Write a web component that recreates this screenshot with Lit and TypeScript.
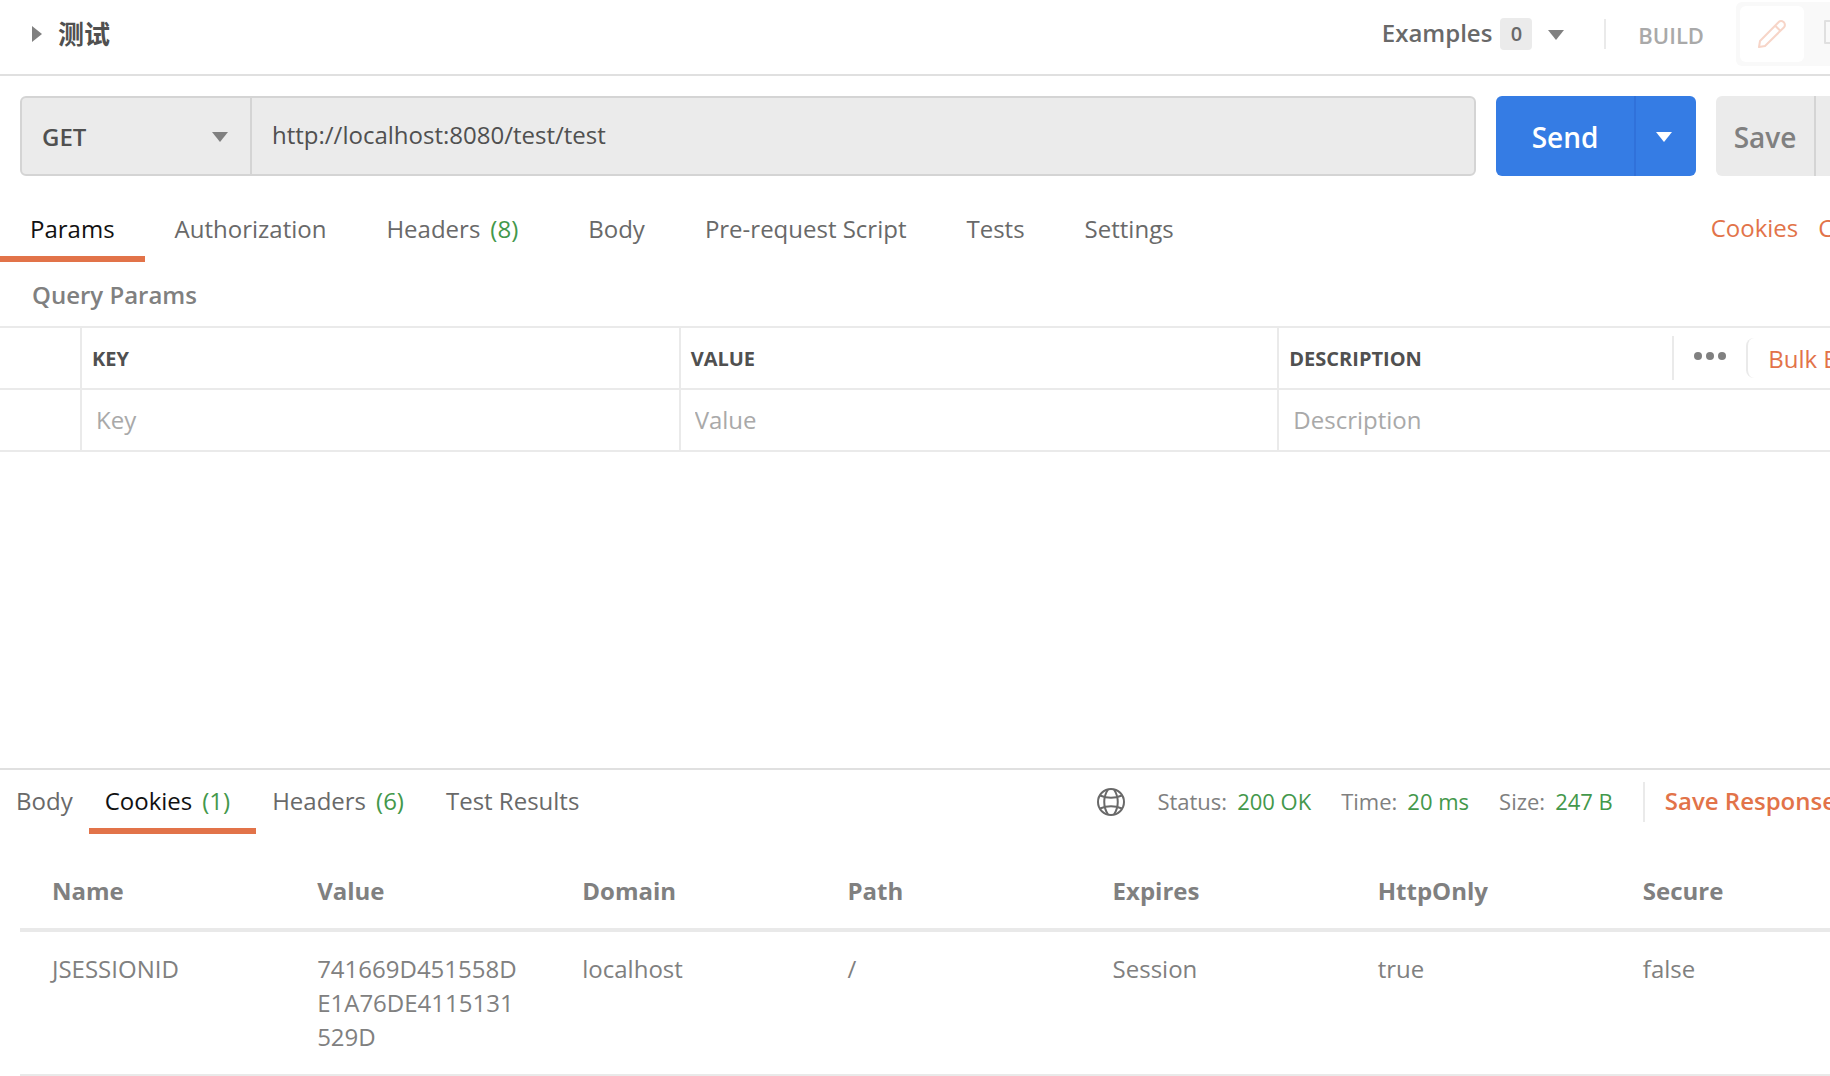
import { LitElement, html, css, svg, nothing } from "lit";
import { customElement, property, state } from "lit/decorators.js";

interface Tab {
  label: string;
  count?: number;
}

interface Cookie {
  name: string;
  value: string;
  domain: string;
  path: string;
  expires: string;
  httpOnly: boolean;
  secure: boolean;
}

const REQUEST_TABS: Tab[] = [
  { label: "Params" },
  { label: "Authorization" },
  { label: "Headers", count: 8 },
  { label: "Body" },
  { label: "Pre-request Script" },
  { label: "Tests" },
  { label: "Settings" },
];

const RESPONSE_TABS: Tab[] = [
  { label: "Body" },
  { label: "Cookies", count: 1 },
  { label: "Headers", count: 6 },
  { label: "Test Results" },
];

const COOKIES: Cookie[] = [
  {
    name: "JSESSIONID",
    value: "741669D451558DE1A76DE4115131529D",
    domain: "localhost",
    path: "/",
    expires: "Session",
    httpOnly: true,
    secure: false,
  },
];

const base = css`
  *,
  *::before,
  *::after {
    box-sizing: border-box;
  }
  button,
  input,
  select {
    margin: 0;
    padding: 0;
    border: 0;
    border-radius: 0;
    background: none;
    color: inherit;
    font: inherit;
    appearance: none;
  }
  button {
    cursor: pointer;
    white-space: nowrap;
  }
  a {
    color: inherit;
    text-decoration: none;
  }
  svg {
    display: block;
    flex: none;
  }
`;

const caret = html`<svg width="16" height="10" viewBox="0 0 16 10" aria-hidden="true">
  ${svg`<path d="M0 0H16L8 10Z" fill="currentColor" />`}
</svg>`;

@customElement("tab-strip")
class TabStrip extends LitElement {
  @property({ attribute: false }) tabs: Tab[] = [];
  @property({ type: Number }) active = 0;
  @property({ type: Boolean, reflect: true }) compact = false;

  static styles = [
    base,
    css`
      :host {
        display: block;
      }
      .strip {
        display: flex;
      }
      .tab {
        display: flex;
        gap: 10px;
        padding: 16px 30px 10px;
        border-bottom: 6px solid transparent;
        color: #696969;
        line-height: 34px;
      }
      :host([compact]) .tab {
        padding: 14px 16px 10px;
      }
      .tab.active {
        border-color: #e27349;
        color: #111;
      }
      .count {
        padding-right: 10px;
        color: #43984b;
      }
    `,
  ];

  render() {
    return html`<div class="strip" role="tablist">
      ${this.tabs.map(
        (tab, i) => html`<button
          class="tab ${i === this.active ? "active" : ""}"
          role="tab"
          aria-selected=${i === this.active}
          @click=${() => (this.active = i)}
        >
          <span>${tab.label}</span>
          ${tab.count === undefined ? nothing : html`<span class="count">(${tab.count})</span>`}
        </button>`
      )}
    </div>`;
  }
}

@customElement("request-header")
class RequestHeader extends LitElement {
  static styles = [
    base,
    css`
      :host {
        display: block;
      }
      .header {
        display: flex;
        align-items: center;
        padding: 2px 20px 8px 32px;
        border-bottom: 2px solid #e0e0e0;
      }
      .title {
        display: flex;
        align-items: center;
        gap: 16px;
        margin-right: auto;
        color: #505050;
        font-size: 26px;
        font-weight: 600;
        line-height: 34px;
      }
      .title svg {
        color: #808080;
      }
      .examples {
        display: flex;
        align-items: center;
        color: #696969;
        font-weight: 600;
        line-height: 32px;
      }
      .examples svg {
        margin: 2px 0 0 16px;
        color: #808080;
      }
      .examples .label {
        padding-bottom: 2px;
      }
      .badge {
        width: 32px;
        margin-left: 8px;
        border-radius: 4px;
        background: #ebebeb;
        font-size: 20px;
        text-align: center;
      }
      .divider {
        width: 2px;
        height: 30px;
        margin: 0 32px 0 40px;
        background: #eaeaea;
      }
      .mode {
        padding-top: 2px;
        color: #a9a9a9;
        font-size: 22px;
        font-weight: 600;
        line-height: 30px;
      }
      .toggle {
        display: flex;
        gap: 4px;
        margin-left: 32px;
        padding: 4px;
        border-radius: 6px;
        background: #f9f9f9;
      }
      .toggle button {
        display: grid;
        place-items: center;
        width: 64px;
        height: 56px;
        border-radius: 6px;
        color: #e0e0e0;
      }
      .toggle .on {
        background: #fff;
        color: #f7d5c8;
      }
    `,
  ];

  render() {
    return html`<header class="header">
      <button class="title">
        <svg width="10" height="16" viewBox="0 0 10 16" aria-hidden="true">
          <path d="M0 0V16L10 8Z" fill="currentColor" />
        </svg>
        <span>测试</span>
      </button>
      <button class="examples">
        <span class="label">Examples</span>
        <span class="badge">0</span>
        ${caret}
      </button>
      <span class="divider"></span>
      <span class="mode">BUILD</span>
      <div class="toggle">
        <button class="on" aria-label="Build">
          <svg width="32" height="32" viewBox="0 0 32 32" fill="none" stroke="currentColor" stroke-width="2" stroke-linejoin="round">
            <path d="M3 29L4 23L22.5 4.2Q25 1.8 27.8 4.2Q30 7 27.8 9.5L9 28Z M19 7.5L24.5 13" />
          </svg>
        </button>
        <button aria-label="Comments">
          <svg width="32" height="32" viewBox="0 0 32 32" fill="none" stroke="currentColor" stroke-width="2" stroke-linejoin="round">
            <path d="M1 3H31V25H16L9 31V25H1Z" />
          </svg>
        </button>
      </div>
    </header>`;
  }
}

@customElement("request-bar")
class RequestBar extends LitElement {
  @state() private url = "http://localhost:8080/test/test";

  static styles = [
    base,
    css`
      :host {
        display: block;
      }
      .bar {
        display: flex;
        gap: 20px;
        height: 80px;
      }
      .address {
        display: flex;
        flex: 1;
        min-width: 0;
        border: 2px solid #d4d4d4;
        border-radius: 6px;
        background: #ebebeb;
        color: #505050;
      }
      .method {
        display: grid;
        align-items: center;
        width: 230px;
        border-right: 2px solid #d4d4d4;
      }
      .method > * {
        grid-area: 1 / 1;
      }
      .method select {
        height: 100%;
        padding-left: 20px;
        font-weight: 600;
      }
      .method svg {
        justify-self: end;
        margin: 2px 22px 0 0;
        color: #808080;
        pointer-events: none;
      }
      .url {
        flex: 1;
        min-width: 0;
        padding: 0 20px 4px;
      }
      .split {
        display: flex;
        border-radius: 6px;
        font-size: 28px;
        font-weight: 600;
      }
      .split button {
        padding-top: 2px;
      }
      .split .more {
        display: grid;
        place-items: center;
        width: 62px;
        padding-right: 4px;
        border-left: 2px solid;
      }
      .send {
        width: 200px;
        background: #357ce4;
        color: #fff;
      }
      .send .more {
        border-color: #3071da;
      }
      .save {
        width: 160px;
        background: #ebebeb;
        color: #808080;
      }
      .save .more {
        border-color: #d4d4d4;
      }
      .main {
        flex: 1;
      }
    `,
  ];

  render() {
    return html`<form class="bar" @submit=${(e: Event) => e.preventDefault()}>
      <div class="address">
        <div class="method">
          <select aria-label="Method">
            <option selected>GET</option>
            <option>POST</option>
            <option>PUT</option>
            <option>DELETE</option>
          </select>
          ${caret}
        </div>
        <input
          class="url"
          type="text"
          aria-label="Request URL"
          .value=${this.url}
          @input=${(e: Event) => (this.url = (e.target as HTMLInputElement).value)}
        />
      </div>
      <div class="split send">
        <button class="main">Send</button>
        <button class="more" type="button" aria-label="Send options">${caret}</button>
      </div>
      <div class="split save">
        <button class="main" type="button">Save</button>
        <button class="more" type="button" aria-label="Save options">${caret}</button>
      </div>
    </form>`;
  }
}

@customElement("params-editor")
class ParamsEditor extends LitElement {
  static styles = [
    base,
    css`
      :host {
        display: block;
      }
      .heading {
        margin: 0;
        padding: 16px 32px 14px;
        color: #808080;
        font-size: 24px;
        font-weight: 600;
        line-height: 34px;
      }
      .frame {
        padding-right: 20px;
        border-top: 2px solid #eaeaea;
      }
      .grid {
        width: 100%;
        border-spacing: 0;
        table-layout: fixed;
      }
      .grid th,
      .grid td {
        height: 62px;
        padding: 0;
        border-bottom: 2px solid #eaeaea;
        text-align: left;
      }
      .grid th + th,
      .grid td + td {
        border-left: 2px solid #eaeaea;
      }
      .grid .gutter {
        width: 80px;
      }
      .grid th {
        padding-left: 10px;
        color: #505050;
        font-size: 20px;
        font-weight: 700;
      }
      .cell {
        display: block;
        width: 100%;
        height: 60px;
        padding: 0 12px 2px 14px;
        color: #505050;
      }
      .cell::placeholder {
        color: #a9a9a9;
        opacity: 1;
      }
      .last {
        display: flex;
        align-items: center;
      }
      .actions {
        display: flex;
        align-items: center;
        margin-left: auto;
        font-size: 24px;
        font-weight: 400;
      }
      .dots {
        width: 74px;
        height: 44px;
        padding: 0 20px 4px;
        border-left: 2px solid #eaeaea;
        color: #808080;
      }
      .bulk {
        height: 40px;
        padding: 0 10px 0 20px;
        border-left: 2px solid #eaeaea;
        border-radius: 8px;
        color: #e27349;
      }
    `,
  ];

  render() {
    return html`<section>
      <h2 class="heading">Query Params</h2>
      <div class="frame">
        <table class="grid">
          <thead>
            <tr>
              <th class="gutter"></th>
              <th>KEY</th>
              <th>VALUE</th>
              <th>
                <div class="last">
                  <span>DESCRIPTION</span>
                  <div class="actions">
                    <button class="dots" aria-label="Column options">
                      <svg width="32" height="8" viewBox="0 0 32 8" fill="currentColor">
                        <circle cx="4" cy="4" r="4" />
                        <circle cx="16" cy="4" r="4" />
                        <circle cx="28" cy="4" r="4" />
                      </svg>
                    </button>
                    <button class="bulk">Bulk Edit</button>
                  </div>
                </div>
              </th>
            </tr>
          </thead>
          <tbody>
            <tr>
              <td class="gutter"></td>
              ${["Key", "Value", "Description"].map(
                (name) => html`<td><input class="cell" type="text" aria-label=${name} placeholder=${name} /></td>`
              )}
            </tr>
          </tbody>
        </table>
      </div>
    </section>`;
  }
}

@customElement("response-meta")
class ResponseMeta extends LitElement {
  static styles = [
    base,
    css`
      :host {
        display: block;
      }
      .meta {
        display: flex;
        align-items: center;
        color: #808080;
        font-size: 22px;
        line-height: 34px;
      }
      .globe {
        margin-right: 32px;
        color: #696969;
      }
      .item {
        display: flex;
        gap: 10px;
        margin-right: 30px;
        padding-bottom: 2px;
      }
      .value {
        color: #43984b;
      }
      .save {
        display: flex;
        align-items: center;
        gap: 24px;
        height: 40px;
        padding: 0 0 2px 20px;
        border-left: 2px solid #eaeaea;
        color: #e27349;
        font-size: 24px;
        font-weight: 600;
      }
    `,
  ];

  render() {
    const items = [
      ["Status:", "200 OK"],
      ["Time:", "20 ms"],
      ["Size:", "247 B"],
    ];
    return html`<div class="meta">
      <button class="globe" aria-label="Network information">
        <svg width="28" height="28" viewBox="0 0 28 28" fill="none" stroke="currentColor" stroke-width="2">
          <circle cx="14" cy="14" r="13" />
          <path d="M11 1.500C6 9 6 19 11 26.500M17 1.500C22 9 22 19 17 26.500" />
          <path d="M3 7.500Q14 12 25 7.500M3 20.500Q14 16 25 20.500" />
        </svg>
      </button>
      ${items.map(
        ([label, value]) => html`<div class="item"><span>${label}</span><span class="value">${value}</span></div>`
      )}
      <button class="save"><span>Save Response</span>${caret}</button>
    </div>`;
  }
}

@customElement("cookie-table")
class CookieTable extends LitElement {
  @property({ attribute: false }) cookies: Cookie[] = [];

  static styles = [
    base,
    css`
      :host {
        display: block;
      }
      .cookies {
        width: 100%;
        border-spacing: 0;
        table-layout: fixed;
        color: #808080;
        line-height: 34px;
      }
      .cookies th,
      .cookies td {
        padding: 20px 28px 20px 32px;
        border-bottom: 2px solid #e9e9e9;
        text-align: left;
        vertical-align: top;
        overflow-wrap: anywhere;
      }
      .cookies th {
        border-bottom-width: 4px;
        font-weight: 700;
      }
    `,
  ];

  render() {
    return html`<table class="cookies">
      <thead>
        <tr>
          ${["Name", "Value", "Domain", "Path", "Expires", "HttpOnly", "Secure"].map((h) => html`<th>${h}</th>`)}
        </tr>
      </thead>
      <tbody>
        ${this.cookies.map(
          (c) => html`<tr>
            <td>${c.name}</td>
            <td>${c.value}</td>
            <td>${c.domain}</td>
            <td>${c.path}</td>
            <td>${c.expires}</td>
            <td>${c.httpOnly}</td>
            <td>${c.secure}</td>
          </tr>`
        )}
      </tbody>
    </table>`;
  }
}

@customElement("app-root")
class AppRoot extends LitElement {
  static styles = [
    base,
    css`
      :host {
        display: block;
        overflow: hidden;
        background: #fff;
        font-family: "Open Sans", "Noto Sans CJK SC", sans-serif;
        font-size: 24px;
      }
      /* The workspace runs a little past the right edge of the window. */
      .workspace {
        display: flex;
        flex-direction: column;
        width: calc(100% + 66px);
        min-height: 100vh;
      }
      .request {
        flex: 1;
      }
      .address-row {
        padding: 20px;
      }
      .row {
        display: flex;
        align-items: center;
        justify-content: space-between;
        padding-right: 20px;
      }
      .links {
        display: flex;
        gap: 20px;
        padding-bottom: 2px;
        color: #e27349;
        line-height: 34px;
      }
      .response {
        border-top: 2px solid #e0e0e0;
      }
      .result {
        padding: 20px 20px 0;
      }
    `,
  ];

  render() {
    return html`<main class="workspace">
      <request-header></request-header>
      <section class="request">
        <div class="address-row"><request-bar></request-bar></div>
        <div class="row">
          <tab-strip .tabs=${REQUEST_TABS} .active=${0}></tab-strip>
          <nav class="links"><a href="#cookies">Cookies</a><a href="#code">Code</a></nav>
        </div>
        <params-editor></params-editor>
      </section>
      <section class="response">
        <div class="row">
          <tab-strip compact .tabs=${RESPONSE_TABS} .active=${1}></tab-strip>
          <response-meta></response-meta>
        </div>
        <div class="result"><cookie-table .cookies=${COOKIES}></cookie-table></div>
      </section>
    </main>`;
  }
}
